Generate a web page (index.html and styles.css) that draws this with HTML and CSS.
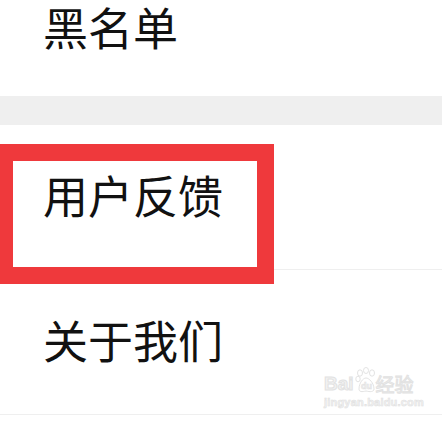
FILE: index.html
```html
<!DOCTYPE html>
<html lang="zh-CN">
<head>
  <meta charset="UTF-8">
  <meta name="viewport" content="width=device-width, initial-scale=1.0">
  <title>设置</title>
  <link rel="stylesheet" href="styles.css">
</head>
<body>
  <div class="menu">
    <div class="item item-first">黑名单</div>
    <div class="gap"></div>
    <div class="item">用户反馈</div>
    <div class="item">关于我们</div>

    <div class="highlight"></div>

    <div class="watermark">
      <div class="wm-top">
        <span class="wm-bai">Bai</span>
        <svg class="wm-paw" width="22" height="26" viewBox="0 0 22 26">
          <g fill="none" stroke="#e3e3e3" stroke-width="1">
            <ellipse cx="5" cy="6" rx="2.5" ry="3.2"/>
            <ellipse cx="11" cy="3.5" rx="2.5" ry="3"/>
            <ellipse cx="17" cy="6" rx="2.5" ry="3.2"/>
            <ellipse cx="3" cy="12" rx="2.2" ry="2.8"/>
            <path d="M4 22 C4 16 8 11 11 11 C14 11 19 16 19 22 C19 25 15 25 11 24 C7 25 4 25 4 22 Z"/>
          </g>
          <text x="11.5" y="22" text-anchor="middle" class="wm-du">du</text>
        </svg>
        <span class="wm-jy">经验</span>
      </div>
      <div class="wm-url">jingyan.baidu.com</div>
    </div>
  </div>
</body>
</html>
```

FILE: styles.css
```css
body {
  margin: 0;
  background-color: #fff;
  font-family: "Noto Sans CJK SC", "Noto Sans", sans-serif;
  color: #111;
  overflow: hidden;
}

.menu {
  position: relative;
  height: 421px;
  overflow: hidden;
}

.item {
  display: flex;
  align-items: center;
  box-sizing: border-box;
  height: 145px;
  padding: 0 0 4px 43px;
  font-size: 45px;
  line-height: 1.2;
  border-bottom: 1px solid #efefef;
}

/* first row is scrolled partly out of view */
.item-first {
  align-items: flex-start;
  height: 96px;
  padding-top: 0;
  border-bottom: none;
}

.gap {
  height: 29px;
  background-color: #efefef;
}

/* red annotation box over the feedback row */
.highlight {
  position: absolute;
  left: -4px;
  top: 144px;
  width: 244px;
  height: 106px;
  border: 17px solid #ef393c;
}

.watermark {
  position: absolute;
  left: 324px;
  top: 366px;
  color: #f2f2f2;
}

.wm-top {
  display: flex;
  align-items: flex-end;
  height: 27px;
}

.wm-bai {
  font-family: "Liberation Sans", sans-serif;
  font-size: 19px;
  font-weight: bold;
  line-height: 1;
  -webkit-text-stroke: 1px #e2e2e2;
}

.wm-paw {
  display: block;
  margin: 0 -1px 0 1px;
}

.wm-du {
  font-family: "Liberation Sans", sans-serif;
  font-size: 9px;
  font-weight: bold;
  fill: #f2f2f2;
  stroke: #e2e2e2;
  stroke-width: 0.6;
}

.wm-jy {
  font-size: 19px;
  line-height: 1;
  -webkit-text-stroke: 1px #e2e2e2;
}

.wm-url {
  margin-top: 3px;
  font-family: "Liberation Sans", sans-serif;
  font-size: 11px;
  font-weight: bold;
  letter-spacing: 0.2px;
  -webkit-text-stroke: 0.6px #e2e2e2;
}
```
